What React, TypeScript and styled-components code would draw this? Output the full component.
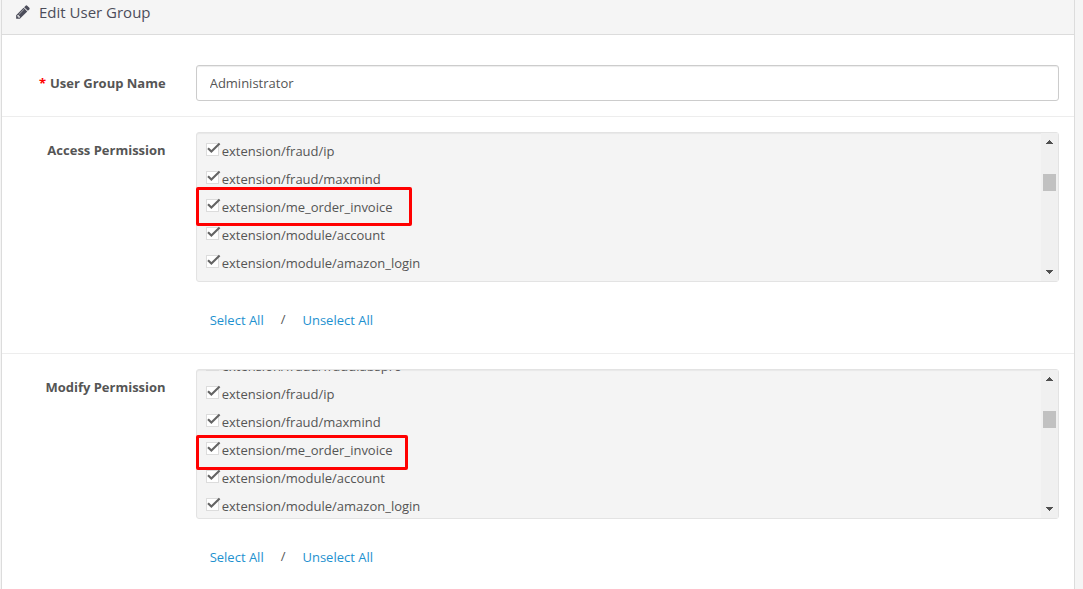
import React, { useLayoutEffect, useRef, useState } from 'react';
import styled, { createGlobalStyle } from 'styled-components';

const GlobalStyle = createGlobalStyle`
  *, *::before, *::after { box-sizing: border-box; }
  body {
    margin: 0;
    background: #f5f5f5;
    color: #555;
    font-family: 'Open Sans', 'Liberation Sans', sans-serif;
    font-size: 13px;
    line-height: 18px;
  }
`;

const Page = styled.main`
  padding: 0 8px 0 1px;
`;

const Panel = styled.section`
  min-height: 100vh;
  background: #fff;
  border: 1px solid #dcdcdc;
  border-width: 0 1px;
`;

const PanelHeading = styled.header`
  display: flex;
  align-items: center;
  gap: 8px;
  padding: 2px 13px 12px;
  background: #f5f5f5;
  border-bottom: 1px solid #dcdcdc;
  color: #4c4d5a;
`;

const PanelTitle = styled.h1`
  margin: 0;
  font-size: 15px;
  font-weight: 400;
  line-height: 20px;
`;

const Form = styled.form`
  padding: 15px 0;
`;

const FormGroup = styled.div`
  display: grid;
  grid-template-columns: 1fr 5fr;
  padding: 15px 0;

  & + & {
    border-top: 1px solid #ededed;
  }
`;

const Label = styled.label`
  padding: 9px 15px 0;
  color: #555;
  font-weight: 700;
  text-align: right;
`;

const Required = styled.span`
  margin-right: 4px;
  color: #f00;
`;

const Field = styled.div`
  min-width: 0;
  padding: 0 15px;
`;

const TextInput = styled.input`
  display: block;
  width: 100%;
  height: 36px;
  padding: 8px 13px;
  background: #fff;
  border: 1px solid #ccc;
  border-radius: 3px;
  box-shadow: inset 0 1px 1px rgba(0, 0, 0, 0.075);
  color: #555;
  font: inherit;
`;

const Well = styled.div`
  position: relative;
  display: flex;
  height: 150px;
  margin-bottom: 20px;
  background: #f4f4f4;
  border: 1px solid #e3e3e3;
  border-radius: 3px;
  box-shadow: inset 0 1px 1px rgba(0, 0, 0, 0.05);
`;

const Viewport = styled.div`
  flex: 1;
  min-width: 0;
  overflow: hidden;
`;

const List = styled.ul`
  margin: 0;
  padding: 4px 9px;
  list-style: none;
`;

const Option = styled.label`
  display: flex;
  align-items: center;
  gap: 3px;
  height: 28px;
`;

const Tick = styled.span`
  position: relative;
  height: 16px;
  width: 13px;

  svg {
    position: absolute;
    left: 1px;
    top: -1px;
    pointer-events: none;
  }
`;

const TickInput = styled.input`
  display: block;
  appearance: none;
  width: 13px;
  height: 13px;
  margin: 0;
  background: #fff;
  border: 1px solid #dcdcdc;

  &:not(:checked) + svg {
    display: none;
  }
`;

const ScrollTrack = styled.div`
  display: flex;
  flex-direction: column;
  align-items: center;
  width: 17px;
  padding: 7px 0;
  background: #f0f0f0;
`;

const ScrollThumb = styled.div`
  width: 13px;
  height: 17px;
  margin: 30px 0 auto;
  background: #c1c1c1;
`;

const Highlight = styled.div<{ $top: number; $width: number; $height: number }>`
  position: absolute;
  left: -1px;
  top: ${(p) => p.$top}px;
  width: ${(p) => p.$width}px;
  height: ${(p) => p.$height}px;
  border: 3px solid #f00;
  border-radius: 2px;
  pointer-events: none;
`;

const Actions = styled.div`
  display: flex;
`;

const LinkButton = styled.button`
  padding: 8px 13px;
  background: none;
  border: 1px solid transparent;
  color: #1e91cf;
  font: inherit;
  cursor: pointer;
`;

const Slash = styled.span`
  padding: 8px 3px;
`;

const PencilIcon = () => (
  <svg width="16" height="16" viewBox="0 0 1792 1792" fill="currentColor" aria-hidden="true">
    <path d="M491 1536l91-91-235-235-91 91v107h128v128h107zM1014 608q0-22-22-22-10 0-17 7l-542 542q-7 7-7 17 0 22 22 22 10 0 17-7l542-542q7-7 7-17zM960 416l416 416-832 832h-416v-416zM1643 512q0 53-37 90l-166 166-416-416 166-165q36-38 90-38 53 0 91 38l235 234q37 39 37 91z" />
  </svg>
);

const CheckMark = () => (
  <svg width="14" height="13" viewBox="0 0 14 13" aria-hidden="true">
    <path d="M1 6.2L4.4 9.6L12.6 1.6" fill="none" stroke="#646464" strokeWidth="2.1" />
  </svg>
);

const Arrow = ({ down = false }: { down?: boolean }) => (
  <svg width="7" height="4" viewBox="0 0 7 4" fill="#505050" shapeRendering="crispEdges" aria-hidden="true">
    <path
      d={
        down
          ? 'M0 0h7v1h-1v1h-1v1h-1v1h-1v-1h-1v-1h-1v-1h-1z'
          : 'M0 4h7v-1h-1v-1h-1v-1h-1v-1h-1v1h-1v1h-1v1h-1z'
      }
    />
  </svg>
);

const ACCESS_ROUTES = [
  'extension/fraud/ip',
  'extension/fraud/maxmind',
  'extension/me_order_invoice',
  'extension/module/account',
  'extension/module/amazon_login',
];

const MODIFY_ROUTES = ['extension/fraud/fraudlabspro', ...ACCESS_ROUTES];

interface PermissionProps {
  name: string;
  title: string;
  routes: string[];
  scrollTop?: number;
  mark: { top: number; width: number; height: number };
}

function PermissionGroup({ name, title, routes, scrollTop = 0, mark }: PermissionProps) {
  const viewport = useRef<HTMLDivElement>(null);
  const [selected, setSelected] = useState<string[]>(routes);

  useLayoutEffect(() => {
    if (viewport.current) viewport.current.scrollTop = scrollTop;
  }, [scrollTop]);

  const toggle = (route: string) =>
    setSelected((current) =>
      current.includes(route) ? current.filter((r) => r !== route) : [...current, route],
    );

  return (
    <FormGroup role="group" aria-labelledby={`${name}-label`}>
      <Label as="span" id={`${name}-label`}>
        {title}
      </Label>
      <Field>
        <Well>
          <Viewport ref={viewport}>
            <List>
              {routes.map((route) => (
                <li key={route}>
                  <Option>
                    <Tick>
                      <TickInput
                        type="checkbox"
                        name={name}
                        value={route}
                        checked={selected.includes(route)}
                        onChange={() => toggle(route)}
                      />
                      <CheckMark />
                    </Tick>
                    {route}
                  </Option>
                </li>
              ))}
            </List>
          </Viewport>
          <ScrollTrack>
            <Arrow />
            <ScrollThumb />
            <Arrow down />
          </ScrollTrack>
          <Highlight $top={mark.top} $width={mark.width} $height={mark.height} />
        </Well>
        <Actions>
          <LinkButton type="button" onClick={() => setSelected(routes)}>
            Select All
          </LinkButton>
          <Slash>/</Slash>
          <LinkButton type="button" onClick={() => setSelected([])}>
            Unselect All
          </LinkButton>
        </Actions>
      </Field>
    </FormGroup>
  );
}

export default function App() {
  return (
    <>
      <GlobalStyle />
      <Page>
        <Panel>
          <PanelHeading>
            <PencilIcon />
            <PanelTitle>Edit User Group</PanelTitle>
          </PanelHeading>
          <Form onSubmit={(event) => event.preventDefault()}>
            <FormGroup>
              <Label htmlFor="group-name">
                <Required>*</Required>
                User Group Name
              </Label>
              <Field>
                <TextInput id="group-name" type="text" defaultValue="Administrator" />
              </Field>
            </FormGroup>
            <PermissionGroup
              name="access"
              title="Access Permission"
              routes={ACCESS_ROUTES}
              mark={{ top: 54, width: 216, height: 39 }}
            />
            <PermissionGroup
              name="modify"
              title="Modify Permission"
              routes={MODIFY_ROUTES}
              scrollTop={22}
              mark={{ top: 65, width: 212, height: 35 }}
            />
          </Form>
        </Panel>
      </Page>
    </>
  );
}
